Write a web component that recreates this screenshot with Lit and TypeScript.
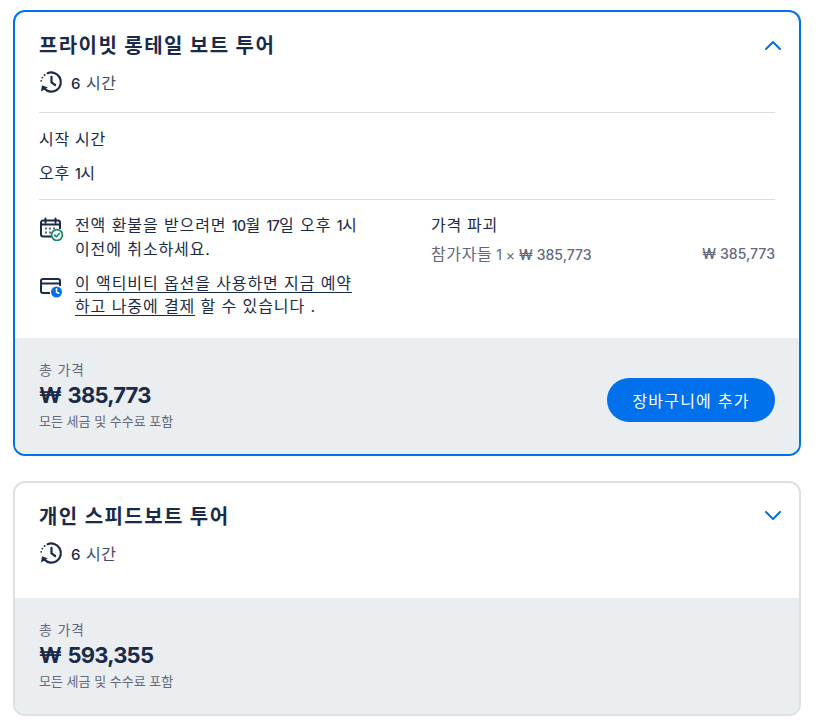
import { LitElement, html, css, svg } from "lit";
import { customElement } from "lit/decorators.js";

const historyIcon = html`<svg class="ic" width="24" height="24" viewBox="0 0 24 24" fill="none" stroke="#1a2b49">
  <path d="M8.6 3.2A9.6 9.6 0 1 1 5.2 18.6" stroke-width="2.2" stroke-linecap="round"/>
  <path d="M12.5 6.8v5.6l3.6 2.6" stroke-width="2.2" stroke-linecap="round" stroke-linejoin="round"/>
  <path d="M2 21.4l1-6.2 5.8 2.4z" fill="#1a2b49" stroke="none"/>
  <circle cx="5.6" cy="4.9" r="1" fill="#1a2b49" stroke="none"/>
  <circle cx="3.4" cy="7.6" r=".95" fill="#1a2b49" stroke="none"/>
  <circle cx="2.2" cy="10.8" r=".9" fill="#1a2b49" stroke="none"/>
</svg>`;

const calendarIcon = html`<svg class="ic" width="24" height="24" viewBox="0 0 24 24" fill="none">
  <path d="M14 19.5H4a2 2 0 0 1-2-2V5.5a2 2 0 0 1 2-2h15a2 2 0 0 1 2 2V12" stroke="#1a2b49" stroke-width="2"/>
  <path d="M6.5 1.5v4M16.500 1.500v4M2 7.500h19" stroke="#1a2b49" stroke-width="2" stroke-linecap="round"/>
  <path d="M6 10.500h2v2H6zM10 10.500h2v2h-2zM14 10.500h2v2h-2zM6 14.500h2v2H6zM10 14.500h2v2h-2z" fill="#5f6b80"/>
  <circle cx="18" cy="18" r="5.400" fill="#fff" stroke="#0a8a5c" stroke-width="1.600"/>
  <path d="M15.600 18.100l1.700 1.700 3.200-3.300" stroke="#0a8a5c" stroke-width="1.500" stroke-linecap="round" stroke-linejoin="round"/>
</svg>`;

const payIcon = html`<svg class="ic" width="24" height="24" viewBox="0 0 24 24" fill="none">
  <path d="M11 18H4a2 2 0 0 1-2-2V6a2 2 0 0 1 2-2h15a2 2 0 0 1 2 2v5" stroke="#1a2b49" stroke-width="2"/>
  <path d="M2 8.500h19" stroke="#1a2b49" stroke-width="2"/>
  <circle cx="17.500" cy="17" r="5.500" fill="#0071eb"/>
  <path d="M17.500 13.800V17l2.200 1.300" stroke="#fff" stroke-width="1.500" stroke-linecap="round" stroke-linejoin="round"/>
</svg>`;

const chevron = (up: boolean) => svg`<svg class="chev" width="20" height="20" viewBox="0 0 20 20" fill="none">
  <path d="${up ? "M3 15l7-7 7 7" : "M3 7l7 7 7-7"}" stroke="#0071eb" stroke-width="2" stroke-linecap="round" stroke-linejoin="round"/>
</svg>`;

@customElement("app-root")
export class AppRoot extends LitElement {
  static styles = css`
    :host {
      display: block;
      width: 816px;
      height: 728px;
      background: #fff;
      overflow: hidden;
      font-family: "Inter", "Noto Sans CJK KR", sans-serif;
      color: #1a2b49;
    }
    .page {
      display: flex;
      flex-direction: column;
      gap: 25px;
      padding: 10px 15px 0 13px;
    }
    .card {
      border: 2px solid #dcdfe4;
      border-radius: 12px;
      overflow: hidden;
      background: #fff;
    }
    .card.open {
      border-color: #0071eb;
    }
    .body {
      padding: 20px 24px 0;
    }
    .head {
      display: flex;
      justify-content: space-between;
      align-items: flex-start;
    }
    h2 {
      margin: 0;
      font-size: 20px;
      line-height: 28px;
      font-weight: 700;
      letter-spacing: 1.4px;
      color: #1a2b49;
    }
    .chev {
      margin-top: 2px;
      margin-right: -8px;
    }
    .dur {
      display: flex;
      align-items: center;
      gap: 8px;
      margin-top: 10px;
      height: 24px;
      font-size: 16px;
      letter-spacing: 0.5px;
      color: #3f4d66;
    }
    .dur b {
      font-weight: 500;
      font-size: 15px;
      color: #1a2b49;
    }
    .ic {
      flex: none;
    }
    .divider {
      height: 1px;
      background: #dcdfe4;
    }
    .first {
      margin-top: 18px;
    }
    .start {
      padding: 15px 0 14px;
      font-size: 16px;
      line-height: 22px;
      letter-spacing: 0.7px;
      color: #1a2b49;
    }
    .start p {
      margin: 0;
    }
    .start p + p {
      margin-top: 12px;
    }
    .details {
      display: grid;
      grid-template-columns: 392px 1fr;
      padding: 14px 0 21px;
    }
    .notes {
      display: flex;
      flex-direction: column;
      gap: 12px;
    }
    .note {
      display: flex;
      gap: 12px;
      font-size: 16px;
      line-height: 22.5px;
      letter-spacing: 0.9px;
      white-space: nowrap;
      color: #1a2b49;
    }
    .note .ic {
      margin-top: 3px;
    }
    .note a {
      color: inherit;
      text-decoration: underline;
      text-underline-offset: 3px;
    }
    .num {
      letter-spacing: -0.6px;
      font-size: 14px;
      font-weight: 500;
    }
    .break h3 {
      margin: 0;
      font-size: 16px;
      line-height: 22px;
      font-weight: 400;
      letter-spacing: 0.7px;
    }
    .line {
      display: flex;
      justify-content: space-between;
      margin-top: 7px;
      font-size: 14px;
      line-height: 22px;
      color: #63687a;
    }
    .line .ko {
      font-size: 16px;
      letter-spacing: 0.6px;
    }
    .line .amt {
      font-weight: 500;
      letter-spacing: 0.05px;
    }
    .total {
      display: flex;
      align-items: center;
      justify-content: space-between;
      padding: 0 24px 2px;
      height: 116px;
      box-sizing: border-box;
      background: #ebeef1;
    }
    .total small {
      display: block;
      font-size: 14px;
      line-height: 18px;
      letter-spacing: 0.8px;
      color: #63687a;
    }
    .total small.fine {
      font-size: 13px;
      letter-spacing: 0;
    }
    .price {
      font-size: 22px;
      line-height: 30px;
      font-weight: 700;
      letter-spacing: -0.8px;
      word-spacing: 2px;
      color: #1a2b49;
      margin: 1px 0 2px;
    }
    button {
      width: 168px;
      height: 44px;
      margin-top: 10px;
      border: 0;
      border-radius: 22px;
      background: #0071eb;
      color: #fff;
      font: inherit;
      font-size: 16px;
      letter-spacing: 1.2px;
      font-weight: 400;
    }
    .spacer {
      height: 33px;
    }
  `;

  private total(price: string, withButton: boolean) {
    return html`<div class="total">
      <div>
        <small>총 가격</small>
        <div class="price">₩ ${price}</div>
        <small class="fine">모든 세금 및 수수료 포함</small>
      </div>
      ${withButton ? html`<button>장바구니에 추가</button>` : ""}
    </div>`;
  }

  render() {
    return html`<div class="page">
      <section class="card open">
        <div class="body">
          <div class="head"><h2>프라이빗 롱테일 보트 투어</h2>${chevron(true)}</div>
          <div class="dur">${historyIcon}<span><b>6</b> 시간</span></div>
          <div class="divider first"></div>
          <div class="start"><p>시작 시간</p><p>오후 <span class="num">1</span>시</p></div>
          <div class="divider"></div>
          <div class="details">
            <div class="notes">
              <div class="note">${calendarIcon}<span>전액 환불을 받으려면 <span class="num">10</span>월 <span class="num">17</span>일 오후 <span class="num">1</span>시<br />이전에 취소하세요.</span></div>
              <div class="note">${payIcon}<span><a>이 액티비티 옵션을 사용하면 지금 예약<br />하고 나중에 결제</a> 할 수 있습니다 .</span></div>
            </div>
            <div class="break">
              <h3>가격 파괴</h3>
              <div class="line"><span><span class="ko">참가자들</span> 1 × <span class="amt">₩ 385,773</span></span><span class="amt">₩ 385,773</span></div>
            </div>
          </div>
        </div>
        ${this.total("385,773", true)}
      </section>
      <section class="card">
        <div class="body">
          <div class="head"><h2>개인 스피드보트 투어</h2>${chevron(false)}</div>
          <div class="dur">${historyIcon}<span><b>6</b> 시간</span></div>
          <div class="spacer"></div>
        </div>
        ${this.total("593,355", false)}
      </section>
    </div>`;
  }
}
